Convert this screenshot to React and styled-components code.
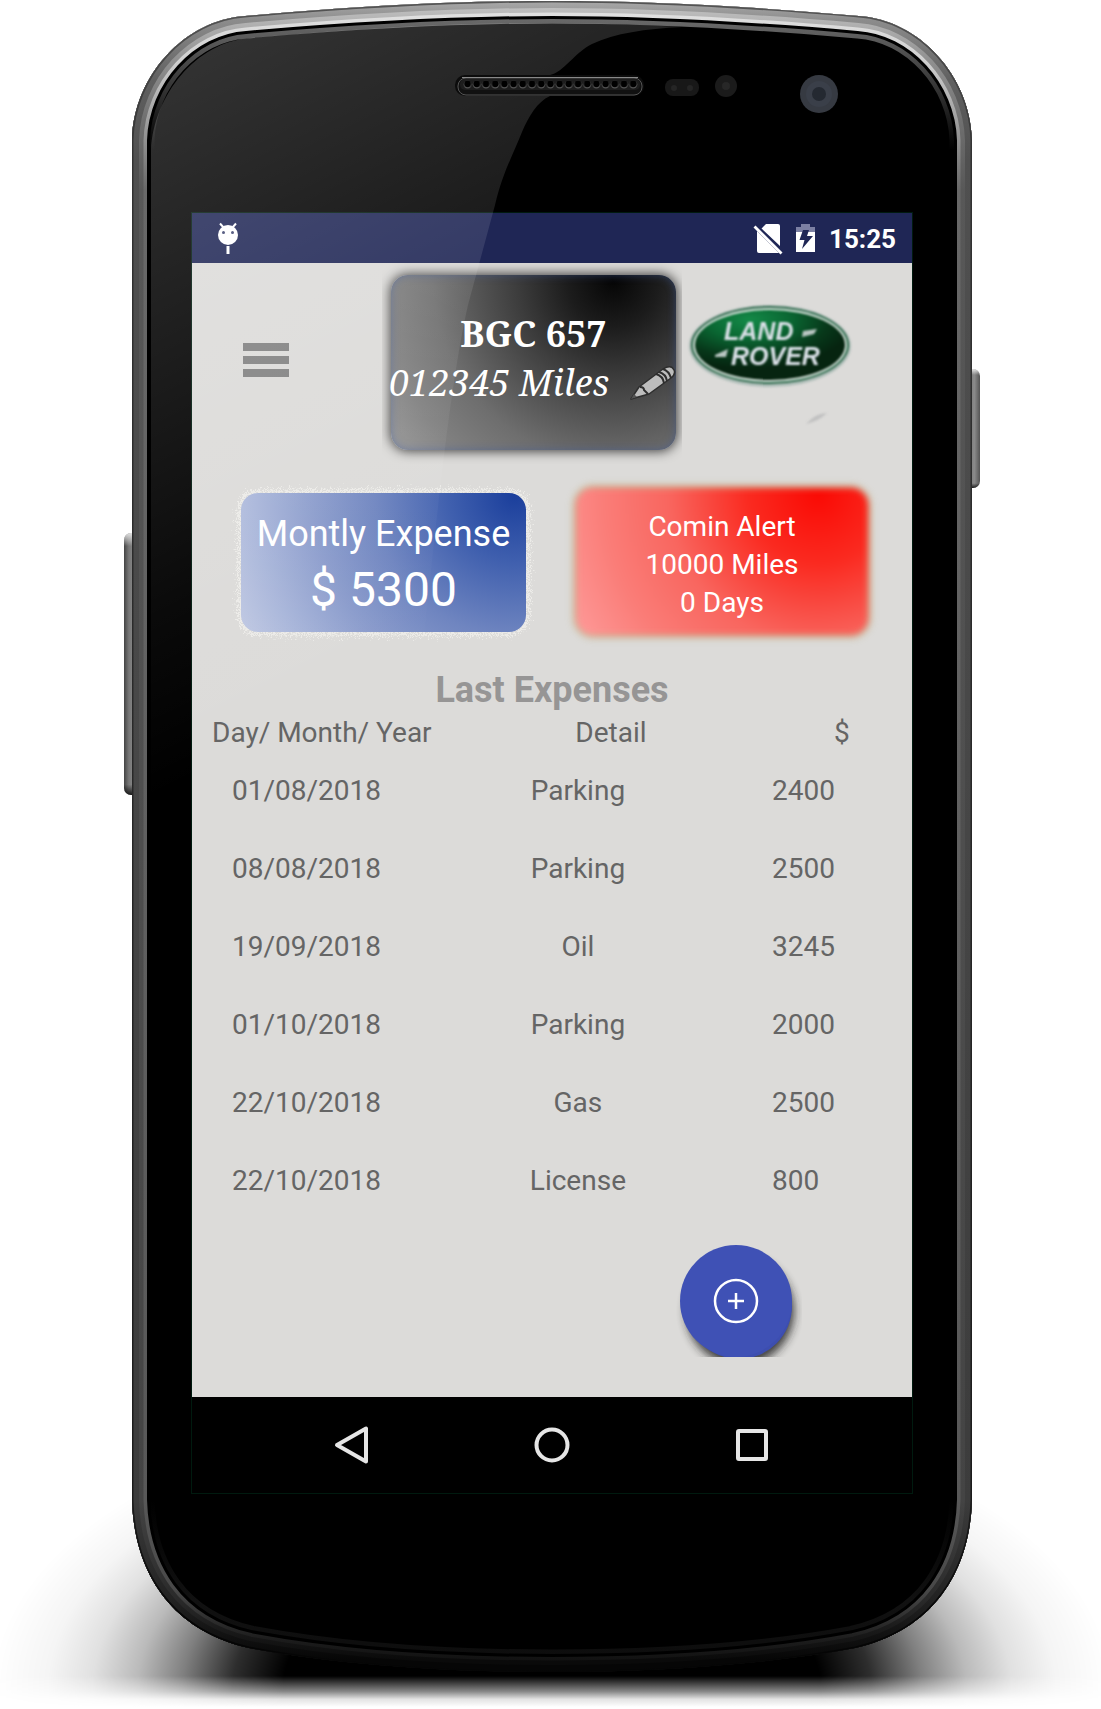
import React from "react";
import styled, { createGlobalStyle } from "styled-components";

const GlobalStyle = createGlobalStyle`
  *, *::before, *::after { box-sizing: border-box; }
  body { margin: 0; background: #fff; font-family: Roboto, "Liberation Sans", sans-serif; }
  button { border: 0; padding: 0; background: none; font: inherit; color: inherit; cursor: pointer; }
  svg { display: block; }
`;

const Phone = styled.div`
  position: relative;
  isolation: isolate;
  max-width: 1101px;
  margin: 0 auto;
  padding: 213px 189px 216px 192px;
`;

const Artwork = styled.svg`
  position: absolute;
  inset: 0;
  width: 100%;
  height: 100%;
  pointer-events: none;
  z-index: ${(p) => (p.$front ? 2 : -1)};
`;

const Screen = styled.main`
  position: relative;
  display: flex;
  flex-direction: column;
  background: #dcdbd9;
  box-shadow: 0 0 0 1px #001a0f;
`;

const StatusBar = styled.header`
  display: flex;
  align-items: center;
  height: 50px;
  padding: 2px 16px 0 24px;
  background: #1f2655;
  color: #fff;
`;

const StatusIcons = styled.div`
  display: flex;
  align-items: center;
  gap: 13px;
  margin-left: auto;
`;

const Clock = styled.time`
  font-size: 26px;
  font-weight: 700;
  line-height: 30px;
`;

const Content = styled.div`
  display: flex;
  flex-direction: column;
  padding-bottom: 40px;
`;

const VehicleHeader = styled.section`
  display: flex;
  align-items: flex-start;
  padding: 12px 48px 0 51px;
`;

const MenuButton = styled.button`
  display: grid;
  flex: none;
  gap: 5px;
  width: 46px;
  margin-top: 68px;
`;

const MenuBar = styled.span`
  height: 8px;
  background: #818181;
`;

const Plate = styled.div`
  flex: none;
  width: 285px;
  height: 175px;
  margin-left: 102px;
  padding-top: 34px;
  border-radius: 17px;
  background: radial-gradient(circle at 78% 4%, #060606 0, #1c1c1c 45px, #3c3c3c 95px, #6e6e6e 180px, #808080 230px, #9c9c9c 290px);
  box-shadow: inset 0 0 9px rgba(60, 90, 160, 0.5), 0 0 12px 1px rgba(0, 0, 0, 0.75);
  clip-path: inset(-12px -6px -14px -9px);
  color: #fff;
  font-family: "Noto Serif", "Droid Serif", "Liberation Serif", serif;
  font-size: 36px;
  line-height: 49px;
  text-align: center;
  white-space: nowrap;
`;

const PlateNumber = styled.div`
  font-weight: 700;
`;

const Mileage = styled.div`
  display: flex;
  align-items: center;
  justify-content: space-between;
  margin-left: -2px;
  font-style: italic;
`;

const Emblem = styled.svg`
  flex: none;
  width: 172px;
  height: 130px;
  margin: 26px 0 0 8px;
  overflow: visible;
  filter: blur(1px);
`;

const Summary = styled.section`
  display: flex;
  justify-content: space-between;
  margin-top: 38px;
  padding: 0 44px 0 49px;
`;

const SummaryCard = styled.div`
  position: relative;
  isolation: isolate;
  display: flex;
  flex-direction: column;
  padding-top: 20px;
  text-align: center;
  color: #fff;
  &::before {
    content: "";
    position: absolute;
    z-index: -1;
    inset: 0;
    border-radius: 17px;
  }
`;

const ExpenseCard = styled(SummaryCard)`
  width: 285px;
  height: 139px;
  margin-top: 5px;
  gap: 7px;
  &::before {
    background: radial-gradient(circle at 96% 2%, #1b3f9c 0, #3f5fae 65px, #6f85c0 140px, #8b9ccc 200px, #a9b6da 260px, #c2cae3 310px);
  }
`;

const AlertCard = styled(SummaryCard)`
  width: 292px;
  height: 147px;
  font-size: 28px;
  line-height: 38px;
  &::before {
    background: radial-gradient(circle at 83% 4%, #fa0a04 0, #fa2a20 70px, #f9665f 150px, #fa7d78 215px, #ffa3a3 300px);
    box-shadow: 0 0 5px 1px #b08a3c;
    filter: blur(3px);
  }
`;

const CardLabel = styled.span`
  font-size: 36px;
  line-height: 42px;
`;

const CardValue = styled.strong`
  font-size: 48px;
  font-weight: 400;
  line-height: 56px;
`;

const GrainSvg = styled.svg`
  position: absolute;
  z-index: -2;
  inset: -16px;
  width: calc(100% + 32px);
  height: calc(100% + 32px);
  pointer-events: none;
`;

const SectionTitle = styled.h2`
  margin: 34px 0 0;
  font-size: 36px;
  line-height: 42px;
  text-align: center;
  color: #969595;
`;

const ExpenseTable = styled.table`
  width: 100%;
  table-layout: fixed;
  border-collapse: collapse;
  font-size: 28px;
  line-height: 33px;
  color: #656565;
`;

const HeadCell = styled.th`
  width: ${(p) => p.$width || "auto"};
  height: 40px;
  padding: 2px 0 0 ${(p) => p.$indent}px;
  font-weight: 400;
  text-align: ${(p) => p.$align || "left"};
`;

const Cell = styled.td`
  height: 78px;
  padding: 0 0 0 ${(p) => p.$indent || 0}px;
  text-align: ${(p) => p.$align || "left"};
`;

const AddButton = styled.button`
  align-self: flex-end;
  width: 132px;
  height: 112px;
  margin: 26px 110px 0 0;
  overflow: hidden;
`;

const NavBar = styled.nav`
  display: flex;
  align-items: center;
  justify-content: center;
  gap: 160px;
  height: 96px;
  background: #000;
`;

const NavButton = styled.button`
  width: 40px;
  height: 40px;
`;

const expenses = [
  ["01/08/2018", "Parking", "2400"],
  ["08/08/2018", "Parking", "2500"],
  ["19/09/2018", "Oil", "3245"],
  ["01/10/2018", "Parking", "2000"],
  ["22/10/2018", "Gas", "2500"],
  ["22/10/2018", "License", "800"],
];

const BODY =
  "M132 140C134 75 185 20 245 16C360 6 450 1 552 1C654 1 744 6 859 16C919 20 970 75 972 140V1500C970 1570 935 1630 855 1648C764 1665 654 1672 552 1672C450 1672 340 1665 249 1648C169 1630 134 1570 132 1500Z";

function Ramp({ id, stops }) {
  return (
    <linearGradient id={id} gradientUnits="userSpaceOnUse" x1="0" y1="0" x2="0" y2="1672">
      {stops.map(([y, color]) => (
        <stop key={y} offset={y / 1672} stopColor={color} />
      ))}
    </linearGradient>
  );
}

function PhoneBody() {
  return (
    <Artwork viewBox="0 0 1101 1709" preserveAspectRatio="none" aria-hidden="true">
      <defs>
        <Ramp id="rimEdge" stops={[[0, "#555"], [150, "#333"], [1500, "#1c1c1c"], [1620, "#050505"]]} />
        <Ramp id="rimOuter" stops={[[0, "#aaa"], [20, "#8c8c8c"], [80, "#606060"], [160, "#505050"], [1500, "#3c3c3c"], [1600, "#222"], [1660, "#060606"]]} />
        <Ramp id="rimMiddle" stops={[[0, "#c6c6c6"], [60, "#909090"], [120, "#707070"], [190, "#585858"], [1500, "#444"], [1600, "#2a2a2a"], [1660, "#0a0a0a"]]} />
        <Ramp id="rimInner" stops={[[0, "#e4e4e4"], [60, "#d0d0d0"], [120, "#a0a0a0"], [190, "#686868"], [1500, "#585858"], [1590, "#484848"], [1640, "#1c1c1c"], [1672, "#0c0c0c"]]} />
        <Ramp id="bevel" stops={[[0, "#777"], [40, "#5a5a5a"], [90, "#333"], [150, "#000"], [1500, "#000"], [1600, "#111"], [1672, "#0c0c0c"]]} />
        <linearGradient id="side">
          <stop offset="0" stopColor="#444" />
          <stop offset=".3" stopColor="#777" />
          <stop offset=".65" stopColor="#8a8a8a" />
          <stop offset="1" stopColor="#555" />
        </linearGradient>
        <linearGradient id="sideEnds" x2="0" y2="1">
          <stop offset="0" stopColor="#eee" stopOpacity=".9" />
          <stop offset=".05" stopColor="#eee" stopOpacity="0" />
          <stop offset=".96" stopColor="#000" stopOpacity="0" />
          <stop offset="1" stopColor="#000" stopOpacity=".8" />
        </linearGradient>
        <radialGradient id="floor" gradientUnits="userSpaceOnUse" cx="0" cy="0" r="1" gradientTransform="translate(552 1688) scale(560 290)">
          <stop offset=".48" stopColor="#000" />
          <stop offset=".57" stopColor="#000" stopOpacity=".82" />
          <stop offset=".66" stopColor="#000" stopOpacity=".5" />
          <stop offset=".74" stopColor="#000" stopOpacity=".27" />
          <stop offset=".82" stopColor="#000" stopOpacity=".12" />
          <stop offset=".9" stopColor="#000" stopOpacity=".04" />
          <stop offset="1" stopColor="#000" stopOpacity="0" />
        </radialGradient>
        <linearGradient id="floorFade" gradientUnits="userSpaceOnUse" x1="0" y1="1676" x2="0" y2="1707">
          <stop offset="0" stopColor="#fff" />
          <stop offset=".5" stopColor="#777" />
          <stop offset=".75" stopColor="#1c1c1c" />
          <stop offset="1" stopColor="#000" />
        </linearGradient>
        <mask id="floorMask" maskUnits="userSpaceOnUse" x="0" y="1390" width="1101" height="319">
          <rect y="1390" width="1101" height="319" fill="url(#floorFade)" />
        </mask>
        <clipPath id="bodyClip"><path d={BODY} /></clipPath>
      </defs>
      <rect y="1390" width="1101" height="319" fill="url(#floor)" mask="url(#floorMask)" />
      <rect x="124" y="533" width="16" height="262" rx="7" fill="url(#side)" />
      <rect x="124" y="533" width="16" height="262" rx="7" fill="url(#sideEnds)" />
      <rect x="964" y="369" width="16" height="119" rx="7" fill="url(#side)" />
      <rect x="964" y="369" width="16" height="119" rx="7" fill="url(#sideEnds)" />
      <g clipPath="url(#bodyClip)" fill="none">
        <path d={BODY} fill="#000" />
        <path d={BODY} stroke="url(#bevel)" strokeWidth="45" />
        <path d={BODY} stroke="#000" strokeWidth="36" />
        <path d={BODY} stroke="url(#rimInner)" strokeWidth="30" />
        <path d={BODY} stroke="url(#rimMiddle)" strokeWidth="23" />
        <path d={BODY} stroke="url(#rimOuter)" strokeWidth="14" />
        <path d={BODY} stroke="url(#rimEdge)" strokeWidth="3" />
      </g>
    </Artwork>
  );
}

function PhoneGlass() {
  return (
    <Artwork $front viewBox="0 0 1101 1709" preserveAspectRatio="none" aria-hidden="true">
      <defs>
        <linearGradient id="glare" gradientUnits="userSpaceOnUse" x1="230" y1="30" x2="520" y2="620">
          <stop offset="0" stopColor="#fff" stopOpacity=".2" />
          <stop offset=".75" stopColor="#fff" stopOpacity=".04" />
          <stop offset="1" stopColor="#fff" stopOpacity="0" />
        </linearGradient>
        <pattern id="mesh" patternUnits="userSpaceOnUse" x="463" y="78" width="9.2" height="13">
          <circle cx="4.6" cy="6.5" r="4" fill="#555" />
          <circle cx="4.6" cy="5.8" r="3.4" fill="#000" />
        </pattern>
      </defs>
      <path
        d="M151 150C154 95 196 42 250 38C365 28 450 23 552 23C600 23 640 25 682 27C645 29 615 33 592 44C574 53 564 72 550 75L550 96C537 102 529 116 522 132C512 157 503 172 495 205L468 305C453 370 440 480 420 675L151 805Z"
        fill="url(#glare)"
      />
      <rect x="455" y="75" width="189" height="21" rx="10" fill="#0c0c0c" />
      <rect x="458" y="78" width="184" height="17" rx="8" fill="#111" stroke="#555" />
      <rect x="460" y="79" width="180" height="11" rx="5" fill="#1d1d1d" />
      <path d="M462 77.500H638" stroke="#888" />
      <rect x="463" y="78" width="175" height="13" fill="url(#mesh)" />
      <rect x="665" y="79" width="34" height="17" rx="8" fill="#181818" />
      <circle cx="674" cy="88" r="3" fill="#252525" />
      <circle cx="690" cy="88" r="3" fill="#252525" />
      <circle cx="726" cy="86" r="11" fill="#1b1b1b" />
      <circle cx="726" cy="86" r="4" fill="#272727" />
      <circle cx="819" cy="94" r="19" fill="#363a42" />
      <circle cx="819" cy="94" r="13" fill="#3a3f49" />
      <circle cx="819" cy="94" r="7" fill="#242931" />
    </Artwork>
  );
}

function BotIcon() {
  return (
    <svg width="24" height="34" viewBox="0 0 24 34" role="img" aria-label="Debugging">
      <circle cx="12" cy="13" r="10" fill="#fff" />
      <path d="M4 1.500L8 6M20 1.500L16 6" stroke="#fff" strokeWidth="2" />
      <circle cx="7.500" cy="10.500" r="1.500" fill="#3e4470" />
      <circle cx="16.500" cy="10.500" r="1.500" fill="#3e4470" />
      <path d="M12 24v8" stroke="#fff" strokeWidth="3" />
    </svg>
  );
}

function NoSimIcon() {
  return (
    <svg width="30" height="32" viewBox="0 0 30 32" role="img" aria-label="No SIM">
      <path d="M13 1h12q2 0 2 2v20L8.500 5.500zM4 8l22 22H6q-2 0-2-2z" fill="#fff" />
      <path d="M1.500 3.500L28.500 30.500" stroke="#fff" strokeWidth="2.800" />
    </svg>
  );
}

function BatteryIcon() {
  return (
    <svg width="20" height="32" viewBox="0 0 20 32" role="img" aria-label="Charging">
      <path d="M0 9V4h5V1h9v3h5v5z" fill="#7c80a3" />
      <path d="M0 9h19v20H0z" fill="#fff" />
      <path d="M7 7h6l-2 6h6L6 26l2.500-9H3.500z" fill="#1f2655" />
    </svg>
  );
}

function PencilIcon() {
  return (
    <svg width="46" height="36" viewBox="0 0 46 36" aria-hidden="true">
      <g fill="#bdbdbd" stroke="#2e2e2e" strokeWidth="1.500" strokeLinejoin="round">
        <path d="M1 34L9 22 33 4Q41-1 44 5 46 9 41 13L19 29z" />
        <path d="M10 22Q14 22 14 25L18 29M26 9Q33 11 34 18M29 7Q36 9 37 16M33 4Q39 6 41 13" fill="none" strokeWidth="2" />
      </g>
      <path d="M1 34l3-5 3 3z" fill="#555" />
    </svg>
  );
}

function LandRoverEmblem() {
  return (
    <Emblem viewBox="0 0 172 130" role="img" aria-label="Land Rover">
      <defs>
        <radialGradient id="green" cx=".36" cy=".14" r=".7">
          <stop offset="0" stopColor="#148a48" />
          <stop offset=".4" stopColor="#0a6632" />
          <stop offset=".75" stopColor="#07381a" />
          <stop offset="1" stopColor="#062410" />
        </radialGradient>
      </defs>
      <ellipse cx="86" cy="45" rx="81" ry="41" fill="#aebdb8" />
      <ellipse cx="86" cy="44" rx="79" ry="39" fill="#2c684a" />
      <ellipse cx="86" cy="44" rx="77" ry="37" fill="#d4e2da" />
      <ellipse cx="86" cy="44" rx="75" ry="35" fill="url(#green)" />
      <g fill="#dbe1e8" fontFamily="'Liberation Sans', sans-serif" fontWeight="700" fontStyle="italic" fontSize="25">
        <text x="40" y="39">LAND</text>
        <text x="47" y="64">ROVER</text>
      </g>
      <path d="M119 30l14-2-3 5-12 3zM31 54l13-6-2 8H31z" fill="#b9c6c2" />
      <path d="M122 123Q132 112 143 112Q135 120 122 123z" fill="#c1c1c1" />
    </Emblem>
  );
}

function Grain() {
  return (
    <GrainSvg viewBox="0 0 317 171" preserveAspectRatio="none" aria-hidden="true">
      <filter id="grain" x="-10%" y="-20%" width="120%" height="140%">
        <feTurbulence type="fractalNoise" baseFrequency="0.9" numOctaves="2" seed="4" result="noise" />
        <feDisplacementMap in="SourceGraphic" in2="noise" scale="20" xChannelSelector="R" yChannelSelector="G" />
      </filter>
      <rect x="15" y="15" width="287" height="141" rx="18" fill="none" stroke="#ecebe8" strokeWidth="5" filter="url(#grain)" />
    </GrainSvg>
  );
}

export default function App() {
  return (
    <>
      <GlobalStyle />
      <Phone>
        <PhoneBody />
        <Screen>
          <StatusBar>
            <BotIcon />
            <StatusIcons>
              <NoSimIcon />
              <BatteryIcon />
              <Clock>15:25</Clock>
            </StatusIcons>
          </StatusBar>
          <Content>
            <VehicleHeader>
              <MenuButton aria-label="Menu">
                <MenuBar /><MenuBar /><MenuBar />
              </MenuButton>
              <Plate>
                <PlateNumber>BGC 657</PlateNumber>
                <Mileage>
                  <span>012345 Miles</span>
                  <button aria-label="Edit mileage"><PencilIcon /></button>
                </Mileage>
              </Plate>
              <LandRoverEmblem />
            </VehicleHeader>
            <Summary>
              <ExpenseCard>
                <Grain />
                <CardLabel>Montly Expense</CardLabel>
                <CardValue>$ 5300</CardValue>
              </ExpenseCard>
              <AlertCard>
                <span>Comin Alert</span>
                <span>10000 Miles</span>
                <span>0 Days</span>
              </AlertCard>
            </Summary>
            <SectionTitle>Last Expenses</SectionTitle>
            <ExpenseTable>
              <thead>
                <tr>
                  <HeadCell $width="33.3%" $indent={20}>Day/ Month/ Year</HeadCell>
                  <HeadCell $width="40.6%" $indent={66} $align="center">Detail</HeadCell>
                  <HeadCell $indent={110}>$</HeadCell>
                </tr>
              </thead>
              <tbody>
                {expenses.map(([date, detail, amount]) => (
                  <tr key={date + amount}>
                    <Cell $indent={40}>{date}</Cell>
                    <Cell $align="center">{detail}</Cell>
                    <Cell $indent={48}>{amount}</Cell>
                  </tr>
                ))}
              </tbody>
            </ExpenseTable>
            <AddButton aria-label="Add expense">
              <svg width="132" height="112" viewBox="0 0 132 112">
                <defs>
                  <filter id="fabShadow" x="-20%" y="-20%" width="140%" height="140%">
                    <feGaussianBlur stdDeviation="5" />
                  </filter>
                </defs>
                <circle cx="70" cy="66" r="54" fill="#222" opacity=".85" filter="url(#fabShadow)" />
                <circle cx="69" cy="61" r="53" fill="#3d4eb0" />
                <circle cx="66" cy="56" r="56" fill="#3f51b5" />
                <circle cx="66" cy="56" r="21" fill="none" stroke="#fff" strokeWidth="2.500" />
                <path d="M58 56h16M66 48v16" stroke="#fff" strokeWidth="2.500" />
              </svg>
            </AddButton>
          </Content>
          <NavBar>
            <NavButton aria-label="Back">
              <svg width="40" height="40" viewBox="0 0 40 40">
                <path d="M5 20L34 3.500V36.500z" fill="none" stroke="#e6e6e6" strokeWidth="4" strokeLinejoin="round" />
              </svg>
            </NavButton>
            <NavButton aria-label="Home">
              <svg width="40" height="40" viewBox="0 0 40 40">
                <circle cx="20" cy="20" r="15.500" fill="none" stroke="#e6e6e6" strokeWidth="4" />
              </svg>
            </NavButton>
            <NavButton aria-label="Recent apps">
              <svg width="40" height="40" viewBox="0 0 40 40">
                <rect x="6" y="6" width="28" height="28" rx="1" fill="none" stroke="#e6e6e6" strokeWidth="4" />
              </svg>
            </NavButton>
          </NavBar>
        </Screen>
        <PhoneGlass />
      </Phone>
    </>
  );
}
